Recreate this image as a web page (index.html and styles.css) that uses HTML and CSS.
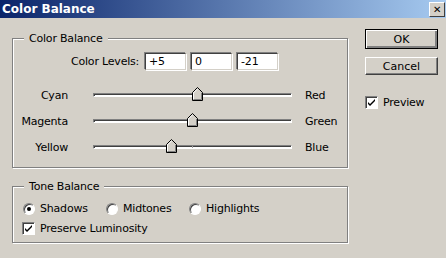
FILE: index.html
```html
<!DOCTYPE html>
<html lang="en">
<head>
    <meta charset="utf-8">
    <title>Color Balance</title>
<link rel="stylesheet" href="styles.css">
</head>
<body>
<div class="dialog">
    <div class="titlebar">
        <span class="title">Color Balance</span>
        <span class="close">&#x2715;</span>
    </div>

    <div class="content">
        <div class="left">
            <div class="group balance">
                <span class="group-label">Color Balance</span>
                <div class="levels">
                    <span class="levels-label">Color Levels:</span>
                    <span class="field">+5</span>
                    <span class="field">0</span>
                    <span class="field">-21</span>
                </div>

                <div class="slider-row">
                    <span class="from">Cyan</span>
                    <div class="track"><span class="thumb" style="left: 98px"></span></div>
                    <span class="to">Red</span>
                </div>
                <div class="slider-row">
                    <span class="from">Magenta</span>
                    <div class="track"><span class="thumb" style="left: 93px"></span></div>
                    <span class="to">Green</span>
                </div>
                <div class="slider-row">
                    <span class="from">Yellow</span>
                    <div class="track"><span class="tick"></span><span class="thumb" style="left: 72px"></span></div>
                    <span class="to">Blue</span>
                </div>
            </div>

            <div class="group tone">
                <span class="group-label">Tone Balance</span>
                <div class="radios">
                    <label class="opt"><span class="radio on"></span>Shadows</label>
                    <label class="opt"><span class="radio"></span>Midtones</label>
                    <label class="opt"><span class="radio"></span>Highlights</label>
                </div>
                <label class="opt"><span class="check"><svg width="9" height="9" viewBox="0 0 9 9"><path d="M1 4 L3 6 L8 1 L8 3 L3 8 L1 6 Z" fill="#000"/></svg></span>Preserve Luminosity</label>
            </div>
        </div>

        <div class="right">
            <button class="btn default">OK</button>
            <button class="btn">Cancel</button>
            <label class="opt preview"><span class="check"><svg width="9" height="9" viewBox="0 0 9 9"><path d="M1 4 L3 6 L8 1 L8 3 L3 8 L1 6 Z" fill="#000"/></svg></span>Preview</label>
        </div>
    </div>
</div>
</body>
</html>
```

FILE: styles.css
```css
body{
    margin: 0;
    background-color: #d4d0c8;
    font-family: Tahoma, "DejaVu Sans", "Liberation Sans", sans-serif;
    font-size: 11px;
    letter-spacing: -0.2px;
    color: #000;
}
.dialog{
    width: 446px;
    height: 258px;
}
.titlebar{
    height: 18px;
    display: flex;
    align-items: center;
    justify-content: space-between;
    padding: 0 1px 0 2px;
    background: linear-gradient(to right, #0a246a, #a6caf0);
}
.title{
    color: #fff;
    font-weight: bold;
    font-size: 12px;
    letter-spacing: 0;
}
.close{
    width: 14px;
    height: 13px;
    line-height: 13px;
    text-align: center;
    font-size: 10px;
    font-weight: bold;
    background-color: #d4d0c8;
    border: 1px solid;
    border-color: #fff #404040 #404040 #fff;
}
.content{
    display: flex;
    padding: 11px 0 0 12px;
}
.left{
    width: 336px;
}
.group{
    position: relative;
    border: 1px solid #808080;
    box-shadow: 1px 1px 0 #fff, inset 1px 1px 0 #fff;
}
.group-label{
    position: absolute;
    top: -7px;
    left: 11px;
    padding: 0 5px;
    background-color: #d4d0c8;
    line-height: 13px;
}
.balance{
    height: 128px;
    margin-top: 9px;
}
.levels{
    display: flex;
    align-items: center;
    margin: 14px 0 0 58px;
    gap: 5px;
}
.field{
    width: 36px;
    height: 15px;
    line-height: 15px;
    padding-left: 3px;
    background-color: #fff;
    border: 1px solid;
    border-color: #404040 #d4d0c8 #d4d0c8 #404040;
    box-shadow: -1px -1px 0 #808080, 1px 1px 0 #fff;
}
.levels-label + .field{
    margin-left: 1px;
}
.slider-row{
    display: flex;
    align-items: center;
    height: 26px;
}
.levels + .slider-row{
    margin-top: 12px;
}
.from{
    width: 55px;
    text-align: right;
}
.to{
    margin-left: 13px;
}
.track{
    position: relative;
    width: 197px;
    height: 2px;
    margin-left: 25px;
    background-color: #fff;
    border: 1px solid;
    border-color: #808080 #fff #fff #808080;
    box-shadow: inset 1px 1px 0 #404040;
}
.thumb{
    position: absolute;
    top: -7px;
    width: 11px;
    height: 14px;
    background: url("data:image/svg+xml,%3Csvg xmlns='http://www.w3.org/2000/svg' width='11' height='14'%3E%3Cpath d='M0.5 13.5 V5.5 L5.5 0.5 L10.5 5.5 V13.5 Z' fill='%23d4d0c8' stroke='%23000'/%3E%3Cpath d='M1.5 12.5 V5.9 L5.5 1.9' fill='none' stroke='%23fff'/%3E%3Cpath d='M9.5 5.9 V12.5 H1.5' fill='none' stroke='%23808080'/%3E%3C/svg%3E");
}
.tick{
    position: absolute;
    left: 98px;
    top: 0;
    width: 1px;
    height: 2px;
    background-color: #a0a0a0;
}
.tone{
    height: 55px;
    margin-top: 18px;
}
.radios{
    display: flex;
    margin: 15px 0 0 10px;
}
.opt{
    display: flex;
    align-items: center;
    gap: 5px;
}
.radios .opt{
    width: 83px;
    flex: none;
}
.radio{
    width: 10px;
    height: 10px;
    border-radius: 50%;
    background-color: #fff;
    border: 1px solid;
    border-color: #808080 #fff #fff #808080;
    box-shadow: inset 1px 1px 0 #404040;
    display: flex;
    align-items: center;
    justify-content: center;
}
.radio.on::after{
    content: "";
    width: 4px;
    height: 4px;
    border-radius: 50%;
    background-color: #000;
}
.check{
    width: 11px;
    height: 11px;
    background-color: #fff;
    border: 1px solid;
    border-color: #808080 #fff #fff #808080;
    box-shadow: inset 1px 1px 0 #404040;
    display: flex;
    align-items: center;
    justify-content: center;
}
.tone > .opt{
    margin: 7px 0 0 9px;
}
.right{
    display: flex;
    flex-direction: column;
    margin-left: 17px;
}
.btn{
    width: 73px;
    height: 18px;
    padding: 0;
    font: inherit;
    background-color: #d4d0c8;
    border: 1px solid;
    border-color: #fff #404040 #404040 #fff;
    box-shadow: inset -1px -1px 0 #808080;
}
.btn.default{
    height: 20px;
    border: 1px solid #000;
    box-shadow: inset 1px 1px 0 #fff, inset -2px -2px 0 #808080;
}
.btn + .btn{
    margin-top: 8px;
}
.preview{
    margin-top: 21px;
}
```
